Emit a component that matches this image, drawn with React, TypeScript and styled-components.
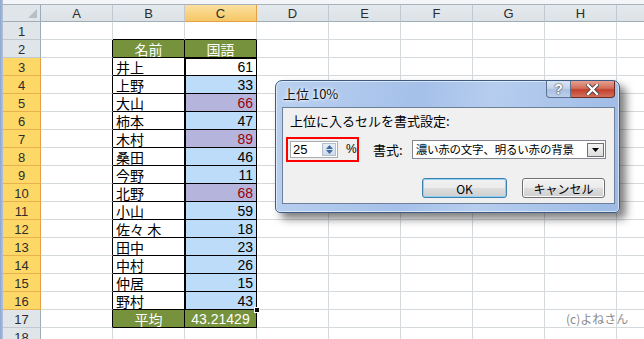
import React from "react";
import styled, { createGlobalStyle } from "styled-components";

const Global = createGlobalStyle`
  html, body { margin: 0; padding: 0; overflow: hidden; background: #fff; }
  body { width: 644px; height: 339px; font-family: "Liberation Sans", "Noto Sans CJK JP", sans-serif; }
`;

const JP = `"Noto Sans CJK JP", "Liberation Sans", sans-serif`;
const NUM = `"Liberation Sans", "Noto Sans CJK JP", sans-serif`;
const GRID = "#d4d9dc";
const GREEN = "#76923c";

const Page = styled.div`
  position: relative;
  width: 644px;
  height: 339px;
  overflow: hidden;
  display: flex;
`;

const LeftStrip = styled.div`
  width: 3px;
  flex: none;
  background: linear-gradient(90deg, #8ea5cd, #b3c3dd);
`;

const Main = styled.div`
  flex: 1;
  min-width: 0;
  display: flex;
  flex-direction: column;
`;

const TopBar = styled.div`
  height: 4px;
  flex: none;
  background: #f3f5f8;
  border-bottom: 1px solid #a9b2bc;
`;

const Sheet = styled.div`
  display: grid;
  grid-template-columns: 38px repeat(8, 72px) 40px;
  grid-template-rows: 17px;
  grid-auto-rows: 18px;
  overflow: hidden;
`;

const Corner = styled.div`
  position: relative;
  background: #dfe5e9;
  border-right: 1px solid #9eacb8;
  border-bottom: 1px solid #9eacb8;
  &::after {
    content: "";
    position: absolute;
    right: 3px;
    bottom: 3px;
    border-style: solid;
    border-width: 0 0 9px 9px;
    border-color: transparent transparent #b7bfc6 transparent;
  }
`;

const ColHead = styled.div<{ $sel?: boolean }>`
  display: flex;
  align-items: center;
  justify-content: center;
  font: 13px/15px ${NUM};
  color: #2c2c2c;
  background: ${(p) =>
    p.$sel ? "linear-gradient(#fbe0a0, #f6c766)" : "linear-gradient(#e4e9ed, #dce2e6)"};
  border-right: 1px solid ${(p) => (p.$sel ? "#e3a143" : "#c1c9d0")};
  border-bottom: 1px solid ${(p) => (p.$sel ? "#e3a143" : "#9eacb8")};
`;

const RowHead = styled.div<{ $sel?: boolean }>`
  display: flex;
  align-items: center;
  justify-content: center;
  padding-top: 1px;
  font: 13px/15px ${NUM};
  color: #2c2c2c;
  background: ${(p) => (p.$sel ? "#fed867" : "#dfe5e9")};
  border-right: 1px solid ${(p) => (p.$sel ? "#e3a143" : "#9eacb8")};
  border-bottom: 1px solid ${(p) => (p.$sel ? "#e9b04f" : "#c1c9d0")};
`;

const Cell = styled.div<{
  $bg?: string;
  $r?: string;
  $b?: string;
  $align?: "left" | "right" | "center";
  $color?: string;
  $num?: boolean;
}>`
  display: flex;
  align-items: center;
  justify-content: ${(p) =>
    p.$align === "right" ? "flex-end" : p.$align === "center" ? "center" : "flex-start"};
  padding: 1px 3px 0 3px;
  white-space: nowrap;
  background: ${(p) => p.$bg ?? "#fff"};
  border-right: 1px solid ${(p) => p.$r ?? GRID};
  border-bottom: 1px solid ${(p) => p.$b ?? GRID};
  color: ${(p) => p.$color ?? "#000"};
  font: ${(p) => (p.$num ? `14px/16px ${NUM}` : `14px/16px ${JP}`)};
`;

const Selection = styled.div`
  position: absolute;
  left: 185px;
  top: 58px;
  width: 72px;
  height: 252px;
  box-sizing: border-box;
  border: 1px solid #000;
  pointer-events: none;
`;

const FillHandle = styled.div`
  position: absolute;
  left: 254px;
  top: 307px;
  width: 4px;
  height: 4px;
  background: #000;
  border: 1px solid #fff;
`;

const Watermark = styled.div`
  position: absolute;
  left: 566px;
  top: 311px;
  font: 12px/16px ${JP};
  color: #8a8a8a;
`;

/* ---------- dialog ---------- */

const Dialog = styled.div`
  position: absolute;
  left: 275px;
  top: 80px;
  width: 345px;
  height: 133px;
  box-sizing: border-box;
  border: 1px solid #3b5a84;
  border-radius: 7px 7px 5px 5px;
  background: linear-gradient(100deg, #b9d0f0 0%, #a5c0e9 40%, #b6cdee 60%, #9dbbe6 100%);
  box-shadow: inset 0 0 0 1px rgba(255, 255, 255, 0.55), 6px 6px 9px rgba(0, 0, 0, 0.5);
  display: flex;
  flex-direction: column;
`;

const TitleBar = styled.div`
  height: 26px;
  flex: none;
  display: flex;
  justify-content: space-between;
  align-items: flex-start;
`;

const Title = styled.div`
  padding: 5px 0 0 7px;
  font: 13px/16px ${JP};
  color: #111;
  text-shadow: 0 0 5px #fff, 0 0 3px #fff;
`;

const CaptionButtons = styled.div`
  display: flex;
  margin-right: 4px;
`;

const CapBtn = styled.div<{ $close?: boolean }>`
  width: ${(p) => (p.$close ? 44 : 25)}px;
  height: 17px;
  box-sizing: border-box;
  display: flex;
  align-items: center;
  justify-content: center;
  border: 1px solid ${(p) => (p.$close ? "#6a2c22" : "#5f7190")};
  border-top: none;
  ${(p) => (p.$close ? "border-left: none;" : "")}
  border-radius: ${(p) => (p.$close ? "0 0 4px 0" : "0 0 0 4px")};
  background: ${(p) =>
    p.$close
      ? "linear-gradient(#e6a08f 0%, #d46e5b 45%, #c2412c 55%, #d4705b 100%)"
      : "linear-gradient(#dbe5f3 0%, #c2d3ec 45%, #a9c0e2 55%, #bdd0ec 100%)"};
  font: bold 14px/16px ${NUM};
  color: #fff;
  text-shadow: 0 0 1px #333, 0 0 2px #444;
`;

const Content = styled.div`
  height: 97px;
  flex: none;
  margin: 0 4px 0 6px;
  box-sizing: border-box;
  background: #f0f0f0;
  border: 1px solid #6d809a;
  display: flex;
  flex-direction: column;
`;

const Label = styled.div`
  margin: 4px 0 0 7px;
  height: 17px;
  font: 13px/17px ${JP};
  color: #000;
`;

const FieldRow = styled.div`
  margin: 8px 0 0 3px;
  display: flex;
  align-items: center;
`;

const RedBox = styled.div`
  width: 73px;
  height: 25px;
  box-sizing: border-box;
  border: 2px solid #ff0000;
  display: flex;
  align-items: center;
  padding-left: 2px;
`;

const SpinInput = styled.div`
  width: 48px;
  height: 17px;
  box-sizing: border-box;
  border: 1px solid #abadb3;
  background: #fff;
  display: flex;
  align-items: center;
  justify-content: space-between;
  padding: 0 1px 0 2px;
  font: 13px/15px ${NUM};
  color: #000;
`;

const SpinButtons = styled.div`
  width: 14px;
  height: 13px;
  display: flex;
  flex-direction: column;
  background: linear-gradient(#e8eef6, #cfdbe9);
  border: 1px solid #b4bfcc;
  box-sizing: border-box;
`;

const SpinHalf = styled.div`
  flex: 1;
  display: flex;
  align-items: center;
  justify-content: center;
`;

const Percent = styled.span`
  margin-left: 8px;
  font: 12px/15px ${NUM};
  color: #000;
`;

const FormatLabel = styled.span`
  margin-left: 14px;
  font: 13px/17px ${JP};
  color: #000;
`;

const Select = styled.div`
  margin-left: 9px;
  width: 194px;
  height: 19px;
  box-sizing: border-box;
  border: 1px solid #828790;
  background: #fff;
  display: flex;
  align-items: center;
  justify-content: space-between;
  padding: 0 1px 0 3px;
  font: 11.5px/15px ${JP};
  letter-spacing: -0.2px;
  color: #000;
  white-space: nowrap;
`;

const SelectArrow = styled.div`
  width: 17px;
  height: 14px;
  flex: none;
  box-sizing: border-box;
  border: 1px solid #707070;
  background: linear-gradient(#f4f4f4, #dcdcdc);
  display: flex;
  align-items: center;
  justify-content: center;
`;

const ButtonRow = styled.div`
  margin-top: 16px;
  padding-right: 9px;
  display: flex;
  justify-content: flex-end;
  gap: 15px;
`;

const Button = styled.div<{ $default?: boolean; $w: number }>`
  width: ${(p) => p.$w}px;
  height: 20px;
  box-sizing: border-box;
  border: 1px solid ${(p) => (p.$default ? "#3c7fb1" : "#707070")};
  box-shadow: ${(p) => (p.$default ? "inset 0 0 0 1px #8fd2f5" : "inset 0 0 0 1px #fcfcfc")};
  border-radius: 3px;
  background: linear-gradient(#f2f2f2 0%, #ebebeb 50%, #dddddd 51%, #cfcfcf 100%);
  display: flex;
  align-items: center;
  justify-content: center;
  font: 12px/15px ${JP};
  color: #000;
`;

type Row = [string, number, boolean?];
const data: Row[] = [
  ["井上", 61],
  ["上野", 33],
  ["大山", 66, true],
  ["柿本", 47],
  ["木村", 89, true],
  ["桑田", 46],
  ["今野", 11],
  ["北野", 68, true],
  ["小山", 59],
  ["佐々 木", 18],
  ["田中", 23],
  ["中村", 26],
  ["仲居", 15],
  ["野村", 43],
];

const cols = ["A", "B", "C", "D", "E", "F", "G", "H", ""];

function renderRow(n: number) {
  const cells: React.ReactNode[] = [];
  cells.push(
    <RowHead key={`h${n}`} $sel={n >= 3 && n <= 16}>
      {n}
    </RowHead>
  );
  const inTable = n >= 2 && n <= 17;
  cols.forEach((c) => {
    const key = `${c || "I"}${n}`;
    if (c === "A") {
      cells.push(<Cell key={key} $r={inTable ? "#000" : undefined} />);
    } else if (c === "B" || c === "C") {
      if (n === 1) {
        cells.push(<Cell key={key} $b="#000" />);
      } else if (n === 2 || n === 17) {
        const isB = c === "B";
        const text = n === 2 ? (isB ? "名前" : "国語") : isB ? "平均" : "43.21429";
        cells.push(
          <Cell
            key={key}
            $bg={GREEN}
            $r="#000"
            $b="#000"
            $align="center"
            $color="#fff"
            $num={!isB && n === 17}
          >
            {text}
          </Cell>
        );
      } else if (inTable) {
        const [name, val, hot] = data[n - 3];
        if (c === "B") {
          cells.push(
            <Cell key={key} $r="#000" $b="#000">
              {name}
            </Cell>
          );
        } else {
          const bg = n === 3 ? "#fff" : hot ? "#b4b4dc" : "#bcdcfa";
          cells.push(
            <Cell
              key={key}
              $r="#000"
              $b="#000"
              $bg={bg}
              $align="right"
              $num
              $color={hot ? "#9c0006" : "#000"}
            >
              {val}
            </Cell>
          );
        }
      } else {
        cells.push(<Cell key={key} />);
      }
    } else {
      cells.push(<Cell key={key} />);
    }
  });
  return cells;
}

export default function App() {
  const rows: React.ReactNode[] = [];
  for (let n = 1; n <= 18; n++) rows.push(...renderRow(n));
  return (
    <>
      <Global />
      <Page>
        <LeftStrip />
        <Main>
          <TopBar />
          <Sheet>
            <Corner />
            {cols.map((c, i) => (
              <ColHead key={`c${i}`} $sel={c === "C"}>
                {c}
              </ColHead>
            ))}
            {rows}
          </Sheet>
        </Main>
        <Selection />
        <FillHandle />
        <Watermark>(c)よねさん</Watermark>
        <Dialog>
          <TitleBar>
            <Title>上位 10%</Title>
            <CaptionButtons>
              <CapBtn>?</CapBtn>
              <CapBtn $close>
                <svg width="13" height="11" viewBox="0 0 13 11">
                  <path
                    d="M2 1 L11 10 M11 1 L2 10"
                    stroke="#3a3a3a"
                    strokeWidth="4"
                    strokeLinecap="square"
                  />
                  <path
                    d="M2 1 L11 10 M11 1 L2 10"
                    stroke="#fff"
                    strokeWidth="2.4"
                    strokeLinecap="square"
                  />
                </svg>
              </CapBtn>
            </CaptionButtons>
          </TitleBar>
          <Content>
            <Label>上位に入るセルを書式設定:</Label>
            <FieldRow>
              <RedBox>
                <SpinInput>
                  25
                  <SpinButtons>
                    <SpinHalf>
                      <svg width="7" height="4" viewBox="0 0 7 4">
                        <path d="M0 4 L3.5 0 L7 4 Z" fill="#3e6aa8" />
                      </svg>
                    </SpinHalf>
                    <SpinHalf>
                      <svg width="7" height="4" viewBox="0 0 7 4">
                        <path d="M0 0 L3.5 4 L7 0 Z" fill="#3e6aa8" />
                      </svg>
                    </SpinHalf>
                  </SpinButtons>
                </SpinInput>
                <Percent>%</Percent>
              </RedBox>
              <FormatLabel>書式:</FormatLabel>
              <Select>
                濃い赤の文字、明るい赤の背景
                <SelectArrow>
                  <svg width="7" height="4" viewBox="0 0 7 4">
                    <path d="M0 0 L3.5 4 L7 0 Z" fill="#000" />
                  </svg>
                </SelectArrow>
              </Select>
            </FieldRow>
            <ButtonRow>
              <Button $default $w={85}>
                OK
              </Button>
              <Button $w={83}>キャンセル</Button>
            </ButtonRow>
          </Content>
        </Dialog>
      </Page>
    </>
  );
}
